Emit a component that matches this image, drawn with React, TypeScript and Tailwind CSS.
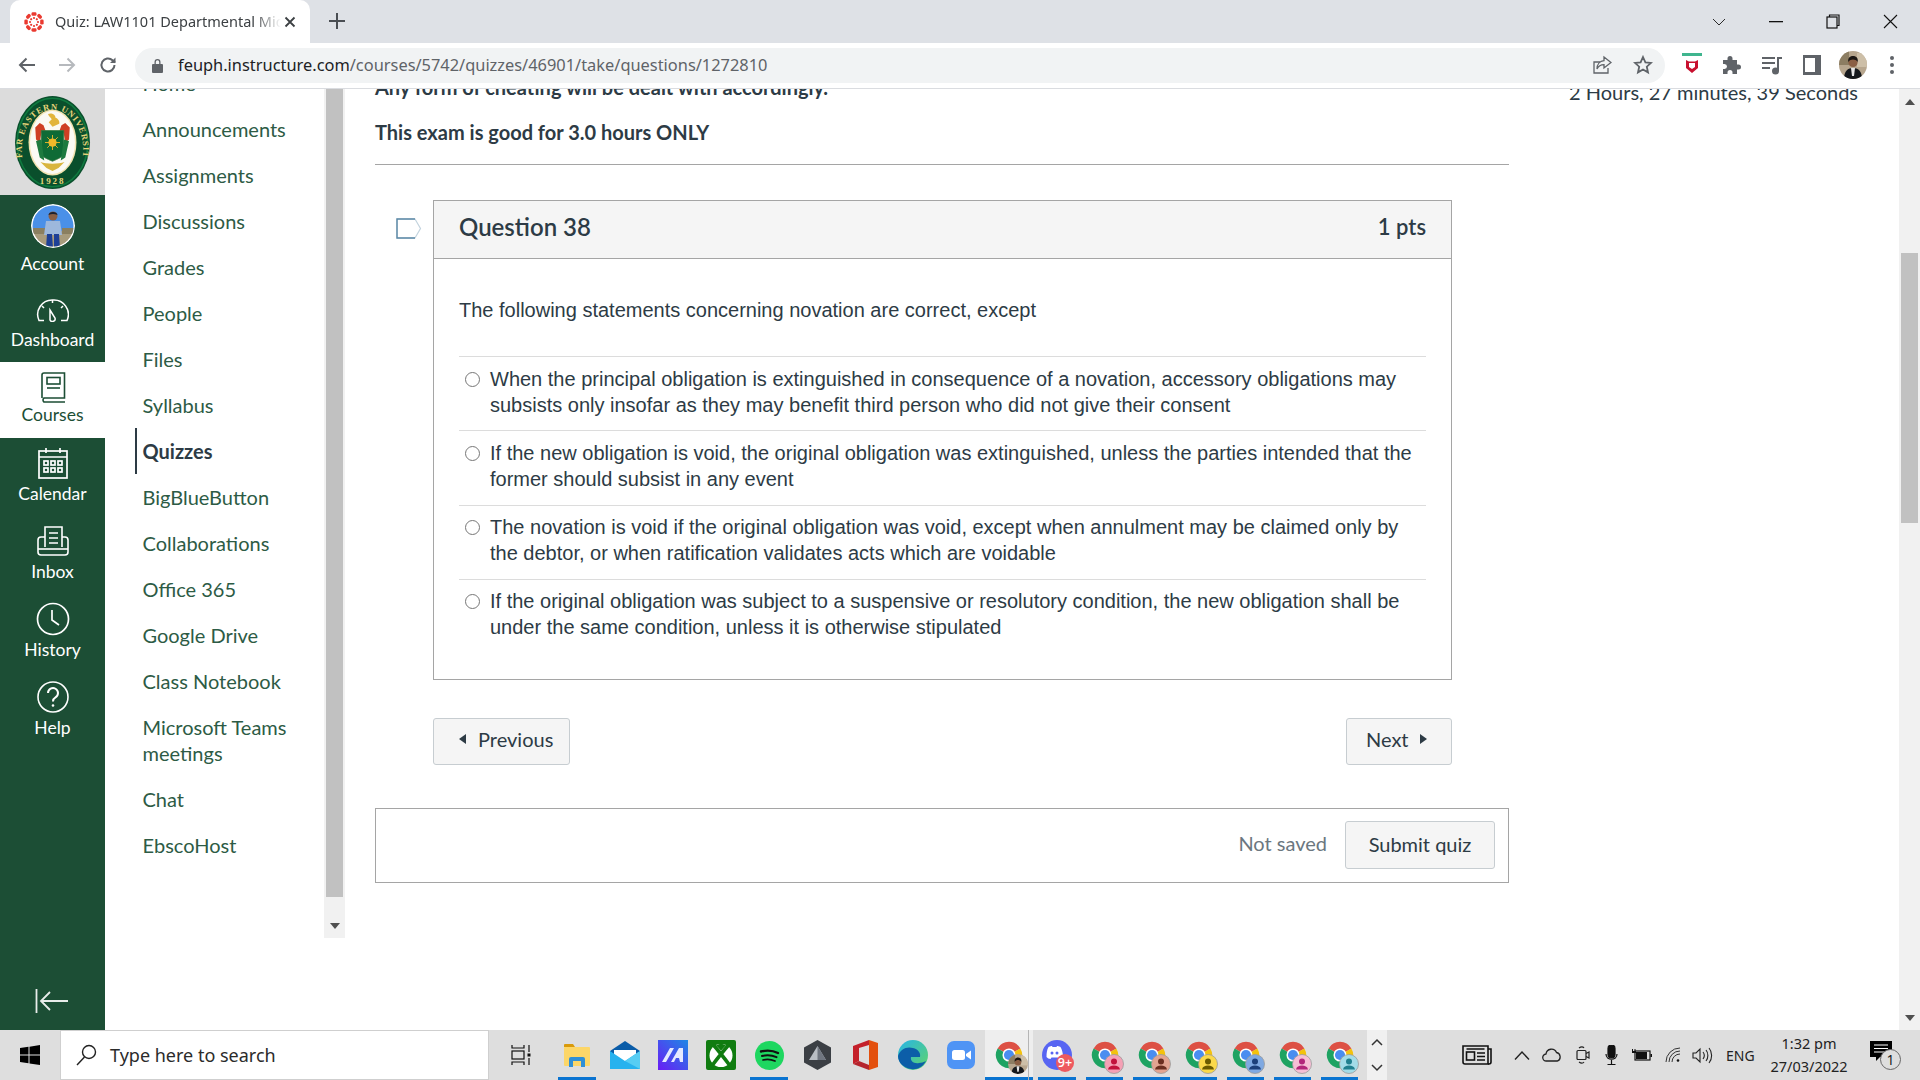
import type { ReactNode } from "react";

const courseLinks = [
  "Announcements",
  "Assignments",
  "Discussions",
  "Grades",
  "People",
  "Files",
  "Syllabus",
  "Quizzes",
  "BigBlueButton",
  "Collaborations",
  "Office 365",
  "Google Drive",
  "Class Notebook",
  "Microsoft Teams meetings",
  "Chat",
  "EbscoHost",
];

const answers = [
  "When the principal obligation is extinguished in consequence of a novation, accessory obligations may subsists only insofar as they may benefit third person who did not give their consent",
  "If the new obligation is void, the original obligation was extinguished, unless the parties intended that the former should subsist in any event",
  "The novation is void if the original obligation was void, except when annulment may be claimed only by the debtor, or when ratification validates acts which are voidable",
  "If the original obligation was subject to a suspensive or resolutory condition, the new obligation shall be under the same condition, unless it is otherwise stipulated",
];

function CanvasIcon() {
  const dots = [0, 45, 90, 135, 180, 225, 270, 315];
  return (
    <svg width="20" height="20" viewBox="0 0 22 22">
      {dots.map((a) => (
        <g key={a} transform={`rotate(${a} 11 11)`}>
          <rect x="8.2" y="0.4" width="5.6" height="3.8" rx="1.5" fill="#ea3a30" />
          <circle cx="11" cy="6.6" r="1.2" fill="#ea3a30" />
        </g>
      ))}
    </svg>
  );
}

function PhotoAvatar({ size }: { size: number }) {
  return (
    <svg width={size} height={size} viewBox="0 0 28 28">
      <clipPath id={`pa${size}`}>
        <circle cx="14" cy="14" r="14" />
      </clipPath>
      <g clipPath={`url(#pa${size})`}>
        <rect width="28" height="28" fill="#b7a68e" />
        <rect x="0" y="0" width="10" height="14" fill="#8c7d62" />
        <rect x="18" y="2" width="10" height="14" fill="#cdbfa8" />
        <path d="M5 28c0-8 4-11 9-11s9 3 9 11z" fill="#15181c" />
        <path d="M12 17h4l-1 8h-2z" fill="#e6e6e6" />
        <circle cx="14" cy="11.5" r="4.6" fill="#8a5f44" />
        <path d="M9.2 11c-.4-4.6 2.2-6 4.8-6s5.3 1.4 4.8 6c-1.500-2-3-2.600-4.800-2.600S10.700 9 9.200 11z" fill="#1c1714" />
      </g>
    </svg>
  );
}

function ChromeBar() {
  return (
    <div className="flex h-[43px] items-end bg-[#dee1e6] pl-[10px] pr-0">
      <div className="flex h-[43px] w-[300px] items-center rounded-t-[10px] bg-white pl-[14px] pr-[14px]">
        <CanvasIcon />
        <span className="ml-[11px] w-[226px] overflow-hidden whitespace-nowrap font-['Noto_Sans',sans-serif] text-[14.5px] text-[#3c4043] [mask-image:linear-gradient(to_right,black_88%,transparent)]">
          Quiz: LAW1101 Departmental Midterm
        </span>
        <svg className="ml-auto" width="12" height="12" viewBox="0 0 12 12" stroke="#3c4043" strokeWidth="1.800">
          <path d="M1.500 1.500l9 9M10.500 1.500l-9 9" />
        </svg>
      </div>
      <svg className="mb-[14px] ml-[19px]" width="16" height="16" viewBox="0 0 16 16" stroke="#4a4e53" strokeWidth="2">
        <path d="M8 0v16M0 8h16" />
      </svg>
      <div className="mb-[14px] ml-auto flex items-center">
        <svg width="14" height="8" viewBox="0 0 14 8" fill="none" stroke="#2b2b2b" strokeWidth="1">
          <path d="M1 1l6 6 6-6" />
        </svg>
        <svg className="ml-[43px]" width="14" height="2" viewBox="0 0 14 2" fill="#111">
          <rect width="14" height="1.300" />
        </svg>
        <svg className="ml-[43px]" width="14" height="15" viewBox="0 0 14 15" fill="none" stroke="#111" strokeWidth="1.200">
          <rect x="1" y="3" width="10" height="11" />
          <path d="M3.500 3V1H13v10.500h-2" />
        </svg>
        <svg className="ml-[43px] mr-[22px]" width="15" height="15" viewBox="0 0 15 15" fill="none" stroke="#111" strokeWidth="1.100">
          <path d="M1 1l13 13M14 1L1 14" />
        </svg>
      </div>
    </div>
  );
}

function AddressBar() {
  return (
    <div className="flex h-[46px] items-center border-b border-[#dadce0] bg-white pb-[1px]">
      <svg className="ml-[18px]" width="18" height="16" viewBox="0 0 18 16" fill="none" stroke="#5f6368" strokeWidth="2">
        <path d="M17 8H2M8.500 1.500L2 8l6.500 6.500" />
      </svg>
      <svg className="ml-[22px]" width="18" height="16" viewBox="0 0 18 16" fill="none" stroke="#b6b9bd" strokeWidth="2">
        <path d="M1 8h15M9.500 1.500L16 8l-6.500 6.500" />
      </svg>
      <svg className="ml-[23px]" width="18" height="18" viewBox="0 0 18 18" fill="none" stroke="#5f6368" strokeWidth="2">
        <path d="M15.500 9a6.500 6.500 0 1 1-2-4.700L16 6.500" />
        <path d="M16.500 1.500v5.500H11" fill="#5f6368" stroke="none" />
      </svg>
      <div className="ml-[18px] flex h-[35px] w-[1530px] items-center rounded-full bg-[#f1f3f4] pl-[17px]">
        <svg width="11" height="15" viewBox="0 0 11 15" fill="#5f6368">
          <path d="M2.500 6V4a3 3 0 0 1 6 0v2H10a1 1 0 0 1 1 1v7a1 1 0 0 1-1 1H1a1 1 0 0 1-1-1V7a1 1 0 0 1 1-1zm1.300 0h3.400V4a1.700 1.700 0 0 0-3.400 0z" />
        </svg>
        <span className="ml-[15px] whitespace-nowrap font-['Noto_Sans',sans-serif] text-[16.4px] text-[#202124]">
          feuph.instructure.com<span className="text-[#5f6368]">/courses/5742/quizzes/46901/take/questions/1272810</span>
        </span>
        <svg className="ml-auto" width="20" height="20" viewBox="0 0 20 20" fill="none" stroke="#5f6368" strokeWidth="1.300">
          <path d="M16 13v5H2V7h6" />
          <path d="M12 2l7 5.500-7 5.500V9.700C9 9.700 6.500 11 5 14c0-5 3-8 7-8.300z" />
        </svg>
        <svg className="ml-[21px] mr-[12px]" width="20" height="20" viewBox="0 0 20 20" fill="none" stroke="#5f6368" strokeWidth="1.800">
          <path d="M10 2l2.400 5.300 5.600.6-4.200 3.800 1.200 5.700L10 14.500l-5 2.900 1.200-5.700L2 7.900l5.600-.6z" />
        </svg>
      </div>
      <svg className="ml-[17px]" width="20" height="24" viewBox="0 0 20 24">
        <rect y="0" width="20" height="3" fill="#3fb58e" />
        <path d="M4 7l3 1.500h6L16 7v8l-6 5-6-5z" fill="#c8102e" />
        <path d="M7 10v4l3 2 3-2v-4" fill="#fff" />
      </svg>
      <svg className="ml-[20px]" width="20" height="20" viewBox="0 0 20 20" fill="#5f6368">
        <path d="M8 1a2.500 2.500 0 0 1 2.500 2.500V5H15v4.500h1.500a2.500 2.500 0 0 1 0 5H15V19H10.500v-1.500a2.500 2.500 0 0 0-5 0V19H1v-5h1.500a2.500 2.500 0 0 0 0-5H1V5h4.500V3.500A2.500 2.500 0 0 1 8 1z" />
      </svg>
      <svg className="ml-[20px]" width="20" height="20" viewBox="0 0 20 20" fill="#5f6368">
        <rect x="0" y="2" width="13" height="2" />
        <rect x="0" y="7" width="13" height="2" />
        <rect x="0" y="12" width="8" height="2" />
        <rect x="15" y="2" width="5" height="2" />
        <rect x="15" y="2" width="2" height="14" />
        <circle cx="13.500" cy="16" r="3.500" />
      </svg>
      <svg className="ml-[20px]" width="20" height="20" viewBox="0 0 20 20" fill="#5f6368">
        <path d="M1 0h18v20H1zM3 3v14h10V3z" fillRule="evenodd" />
      </svg>
      <span className="ml-[17px]">
        <PhotoAvatar size={28} />
      </span>
      <span className="ml-[23px] flex flex-col gap-[3px]">
        <span className="h-[4px] w-[4px] rounded-full bg-[#5f6368]" />
        <span className="h-[4px] w-[4px] rounded-full bg-[#5f6368]" />
        <span className="h-[4px] w-[4px] rounded-full bg-[#5f6368]" />
      </span>
    </div>
  );
}

function SchoolSeal() {
  return (
    <svg width="77" height="93" viewBox="0 0 100 124">
      <ellipse cx="50" cy="62" rx="50" ry="62" fill="#0a4f2c" />
      <ellipse cx="50" cy="62" rx="47" ry="59" fill="none" stroke="#0f7a3f" strokeWidth="2" />
      <ellipse cx="50" cy="62" rx="32" ry="44" fill="#f2e3b0" />
      <ellipse cx="50" cy="62" rx="30" ry="42" fill="#fbfaf4" />
      <path id="sealArc" d="M10 84 A41 54 0 1 1 90 84" fill="none" />
      <text fontFamily="'Liberation Serif',serif" fontSize="11.500" fontWeight="700" fill="#e8d47a" letterSpacing="1.100">
        <textPath href="#sealArc" startOffset="1%">FAR EASTERN UNIVERSITY</textPath>
      </text>
      <text x="50" y="117" textAnchor="middle" fontFamily="'Liberation Serif',serif" fontSize="12" fontWeight="700" fill="#e8d47a" letterSpacing="2.500">
        1928
      </text>
      <path d="M44 24c4-2 10 0 10 5 3 1 6 4 5 8l-9 4-5-6 4-4c-2-3-4-4-5-7z" fill="#e2b53c" />
      <path d="M27 42l6-6 5 3 3 8-6 3-2 12-5-4zM73 42l-6-6-5 3-3 8 6 3 2 12 5-4z" fill="#cf3f24" />
      <path d="M35 46h30v30c0 5-8 8-15 11-7-3-15-6-15-11z" fill="#0e6b36" stroke="#3a7a42" strokeWidth="1" />
      <path d="M28 60l5 22 6 4-4-28zM72 60l-5 22-6 4 4-28z" fill="#1d7a3f" />
      <circle cx="50" cy="62" r="5.500" fill="#f0b92a" />
      <path d="M50 52v20M40 62h20M43 55l14 14M57 55L43 69" stroke="#f0b92a" strokeWidth="1.200" />
      <path d="M34 88c8 3 24 3 32 0l-8 8-8 4-8-4z" fill="#d9b53e" />
    </svg>
  );
}

function DashboardIcon() {
  return (
    <svg width="33" height="23" viewBox="0 0 33 23" fill="none" stroke="#fff" strokeWidth="1.500">
      <path d="M8 21.500H3A14.500 14.500 0 0 1 16.500 1 14.500 14.500 0 0 1 31 21.500h-6" />
      <path d="M14 11l5 8a2.700 2.700 0 0 1-5 2z" />
      <path d="M16.500 1v3M6 7l2 2M27 7l-2 2" />
    </svg>
  );
}

function CoursesIcon() {
  return (
    <svg width="26" height="31" viewBox="0 0 26 31" fill="none" stroke="#1c4e35" strokeWidth="1.600">
      <path d="M2 26V3a2 2 0 0 1 2-2h20.500v25H4a2.500 2.500 0 0 0 0 4h21" />
      <rect x="7" y="5.500" width="13" height="6.500" />
      <path d="M7 16h13" />
    </svg>
  );
}

function CalendarIcon() {
  const cells = [0, 1, 2];
  return (
    <svg width="30" height="32" viewBox="0 0 30 32" fill="none" stroke="#fff" strokeWidth="1.700">
      <rect x="1" y="4" width="28" height="27" />
      <path d="M1 10h28M8 1v5M22 1v5" />
      {cells.map((c) => (
        <g key={c}>
          <rect x={6 + c * 7} y="14" width="4" height="4" />
          <rect x={6 + c * 7} y="21" width="4" height="4" />
        </g>
      ))}
    </svg>
  );
}

function InboxIcon() {
  return (
    <svg width="32" height="30" viewBox="0 0 32 30" fill="none" stroke="#fff" strokeWidth="1.600">
      <path d="M8 21V1h17v20" />
      <path d="M12 7h9M12 12h9M12 17h9" />
      <path d="M8 11H4a3 3 0 0 0-3 3v12a3 3 0 0 0 3 3h24a3 3 0 0 0 3-3V14a3 3 0 0 0-3-3h-3" />
      <path d="M1 23h30" />
    </svg>
  );
}

function HistoryIcon() {
  return (
    <svg width="34" height="34" viewBox="0 0 34 34" fill="none" stroke="#fff" strokeWidth="1.700">
      <circle cx="17" cy="17" r="15.500" />
      <path d="M16 8v10l7 5" />
    </svg>
  );
}

function HelpIcon() {
  return (
    <svg width="32" height="32" viewBox="0 0 32 32" fill="none" stroke="#fff" strokeWidth="1.600">
      <circle cx="16" cy="16" r="15" />
      <path d="M11 12a5 5 0 1 1 7.500 4.400c-1.700 1-2.500 2-2.500 4" strokeWidth="2" />
      <circle cx="16" cy="24.500" r="1.300" fill="#fff" stroke="none" />
    </svg>
  );
}

function NavItem({ icon, label, height, active, labelClass }: { icon: ReactNode; label: string; height: string; active?: boolean; labelClass?: string }) {
  return (
    <div className={`flex flex-col items-center pt-[8px] ${height} ${active ? "bg-white text-[#1c4e35]" : "text-white"}`}>
      <div className="flex h-[34px] items-center justify-center">{icon}</div>
      <span className={`leading-[24px] ${labelClass ?? "mt-[2px]"}`}>{label}</span>
    </div>
  );
}

function GlobalNav() {
  return (
    <div className="flex w-[105px] shrink-0 flex-col bg-[#1c4e35] font-['Lato',sans-serif] text-[17.500px]">
      <div className="flex h-[106px] shrink-0 items-center justify-center bg-[#dcdcdc]">
        <SchoolSeal />
      </div>
      <div className="flex h-[90px] flex-col items-center pt-[9px] text-white">
        <svg className="rounded-full" width="44" height="44" viewBox="0 0 44 44">
          <circle cx="22" cy="22" r="22" fill="#fff" />
          <clipPath id="acct">
            <circle cx="22" cy="22" r="20.500" />
          </clipPath>
          <g clipPath="url(#acct)">
            <rect width="44" height="30" fill="#4a90e8" />
            <rect y="27" width="44" height="17" fill="#a89b7c" />
            <rect x="2" y="24" width="12" height="6" fill="#8a7f60" />
            <rect x="31" y="24" width="12" height="6" fill="#8a7f60" />
            <path d="M15 17h14l2 14H13z" fill="#9db8dc" />
            <path d="M16 30h5l1 14h-7zM23 30h5l1 14h-6z" fill="#1d3f96" />
            <circle cx="22" cy="12" r="4.500" fill="#8a5f44" />
            <path d="M17.500 11c0-4 9-4 9 0-3-1.500-6-1.500-9 0z" fill="#1b2030" />
          </g>
        </svg>
        <span className="mt-[4px] leading-[24px]">Account</span>
      </div>
      <NavItem icon={<DashboardIcon />} label="Dashboard" height="h-[77px]" labelClass="mt-[1px]" />
      <NavItem icon={<CoursesIcon />} label="Courses" height="h-[76px]" active labelClass="mt-[-1px]" />
      <NavItem icon={<CalendarIcon />} label="Calendar" height="h-[78px]" />
      <NavItem icon={<InboxIcon />} label="Inbox" height="h-[78px]" />
      <NavItem icon={<HistoryIcon />} label="History" height="h-[78px]" />
      <NavItem icon={<HelpIcon />} label="Help" height="h-[78px]" />
      <div className="mt-auto pb-[17px] pl-[35px]">
        <svg width="34" height="24" viewBox="0 0 34 24" fill="none" stroke="#e8ecea" strokeWidth="1.800">
          <path d="M1.500 0v24M33 12H6M15 3l-9 9 9 9" />
        </svg>
      </div>
    </div>
  );
}

function CourseNav() {
  return (
    <div className="relative flex h-[849px] w-[240px] shrink-0 overflow-hidden font-['Lato',sans-serif] text-[20px]">
      <div className="w-[219px] pl-[30px]">
        <ul className="-mt-[29px] text-[#2d5b45]">
          <li className="flex h-[46px] items-center pl-[7.500px]">Home</li>
          {courseLinks.map((link) =>
            link === "Quizzes" ? (
              <li key={link} className="flex h-[46px] items-center border-l-2 border-[#2d3b45] pl-[5.500px] font-bold text-[#2d3b45]">
                {link}
              </li>
            ) : (
              <li key={link} className={`flex items-center pl-[7.500px] leading-[26px] ${link.length > 20 ? "h-[72px]" : "h-[46px]"}`}>
                {link}
              </li>
            ),
          )}
        </ul>
      </div>
      <div className="flex h-full w-[21px] flex-col items-center bg-[#f1f1f1]">
        <div className="h-[808px] w-[17px] bg-[#c1c1c1]" />
        <svg className="mt-[26px]" width="10" height="6" viewBox="0 0 10 6" fill="#505050">
          <path d="M0 0h10L5 6z" />
        </svg>
      </div>
    </div>
  );
}

function LabelIcon() {
  return (
    <svg width="26" height="21" viewBox="0 0 26 21" fill="none">
      <path d="M1 1h18l5.500 9.500L19 20H1z" stroke="#c3d3de" strokeWidth="1.200" />
      <path d="M19 1H1v19h18" stroke="#5b88a6" strokeWidth="1.400" />
    </svg>
  );
}

function NavButton({ children, className }: { children: ReactNode; className: string }) {
  return (
    <div className={`flex h-[47px] items-center rounded-[3px] border border-[#c7cdd1] bg-[#f5f5f5] pb-[5px] text-[20px] text-[#2d3b45] ${className}`}>
      {children}
    </div>
  );
}

function QuestionCard() {
  return (
    <div className="flex">
      <div className="ml-[21px] mt-[18px] w-[37px]">
        <LabelIcon />
      </div>
      <div className="w-[1019px]">
        <div className="h-[480px] border border-[#a5a5a5]">
          <div className="flex h-[58px] items-center justify-between border-b border-[#a5a5a5] bg-[#f5f5f5] px-[25px] pb-[6px] text-[#2d3b45]">
            <span className="text-[24px] font-semibold">Question 38</span>
            <span className="text-[22px] font-semibold">1 pts</span>
          </div>
          <div className="px-[25px] font-['Liberation_Sans',Arial,sans-serif] text-[20px] leading-[26px] text-[#2d3b45]">
            <p className="flex h-[98px] items-center border-b border-[#dcdcdc] pt-[5px]">
              The following statements concerning novation are correct, except
            </p>
            {answers.map((a, i) => (
              <label key={a} className={`flex h-[74.250px] pt-[8.500px] ${i < 3 ? "border-b border-[#dcdcdc]" : ""}`}>
                <input type="radio" name="q38" className="ml-[6px] mr-[10px] mt-[6px] h-[15px] w-[15px] shrink-0" />
                <span>{a}</span>
              </label>
            ))}
          </div>
        </div>
        <div className="mt-[38px] flex justify-between">
          <NavButton className="w-[137px] pl-[25px]">
            <svg className="mr-[12px]" width="7" height="10" viewBox="0 0 7 10" fill="#2d3b45">
              <path d="M7 0v10L0 5z" />
            </svg>
            Previous
          </NavButton>
          <NavButton className="w-[106px] pl-[19px]">
            Next
            <svg className="ml-[11px]" width="7" height="10" viewBox="0 0 7 10" fill="#2d3b45">
              <path d="M0 0v10l7-5z" />
            </svg>
          </NavButton>
        </div>
      </div>
    </div>
  );
}

function QuizContent() {
  return (
    <div className="flex min-w-0 flex-1 overflow-hidden font-['Lato',sans-serif]">
      <div className="ml-[30px] w-[1134px] shrink-0">
        <p className="-mt-[15.500px] text-[20px] font-bold leading-[26px] text-[#2d3b45]">Any form of cheating will be dealt with accordingly.</p>
        <p className="mt-[19px] text-[20px] font-bold leading-[26px] text-[#2d3b45]">This exam is good for 3.0 hours ONLY</p>
        <div className="mt-[19.500px] h-px bg-[#a5a5a5]" />
        <div className="mt-[35px]">
          <QuestionCard />
        </div>
        <div className="mt-[43px] flex h-[75px] items-start justify-end border border-[#a5a5a5] pr-[13px] pt-[12px]">
          <span className="mr-[18px] mt-[8px] text-[20px] leading-[28px] text-[#6b7780]">Not saved</span>
          <div className="flex h-[48px] w-[150px] items-center justify-center rounded-[3px] border border-[#c7cdd1] bg-[#f5f5f5] pb-[2px] text-[20px] text-[#2d3b45]">
            Submit quiz
          </div>
        </div>
      </div>
      <div className="ml-[60px] -mt-[10px] w-[289px] whitespace-nowrap text-right text-[20px] leading-[26px] text-[#2d3b45]">
        2 Hours, 27 minutes, 39 Seconds
      </div>
    </div>
  );
}

function PageScrollbar() {
  return (
    <div className="flex w-[21px] shrink-0 flex-col items-center bg-[#f1f1f1]">
      <svg className="mt-[10px]" width="10" height="6" viewBox="0 0 10 6" fill="#505050">
        <path d="M0 6h10L5 0z" />
      </svg>
      <div className="mt-[148px] h-[270px] w-[17px] bg-[#c1c1c1]" />
      <svg className="mb-[9px] mt-auto" width="10" height="6" viewBox="0 0 10 6" fill="#505050">
        <path d="M0 0h10L5 6z" />
      </svg>
    </div>
  );
}

function Explorer() {
  return (
    <svg width="28" height="24" viewBox="0 0 28 24">
      <path d="M1 2a1 1 0 0 1 1-1h8l2 3H1z" fill="#d99a0b" />
      <rect x="1" y="4" width="26" height="19" rx="1" fill="#fcd668" />
      <path d="M6 24v-8a2 2 0 0 1 2-2h12a2 2 0 0 1 2 2v8h-4v-6h-8v6z" fill="#2f8fd6" />
    </svg>
  );
}

function Mail() {
  return (
    <svg width="30" height="28" viewBox="0 0 30 28">
      <path d="M0 10L15 0l15 10v18H0z" fill="#0a5ca8" />
      <path d="M4 9h22v6l-11 6-11-6z" fill="#fff" />
      <path d="M0 10l15 10 15-10v18H0z" fill="#27b2ee" />
      <path d="M15 20l15-10v18z" fill="#57cdf3" />
    </svg>
  );
}

function TaskIcon({ children, underline, wide, active }: { children: ReactNode; underline?: boolean; wide?: boolean; active?: boolean }) {
  return (
    <div className={`relative flex h-full shrink-0 items-center justify-center ${wide ? "w-[48px]" : "w-[47px]"} ${active ? "bg-[#eeeeee]" : ""}`}>
      {children}
      {underline && <div className="absolute bottom-0 left-[5px] right-[5px] h-[3px] bg-[#0a74d1]" />}
      {active && <div className="absolute bottom-0 left-0 right-0 h-[3px] bg-[#0a74d1]" />}
      {active && <div className="absolute bottom-0 right-[4px] top-0 w-px bg-[#b5b5b5]" />}
    </div>
  );
}

function ChromeIcon({ badge, person, photo }: { badge?: string; person?: string; photo?: boolean }) {
  return (
    <div className="relative h-[28px] w-[28px]">
      <svg width="28" height="28" viewBox="0 0 32 32">
        <path d="M16 16L3 8.500A15 15 0 0 1 29 8.500z" fill="#dd5044" />
        <path d="M16 16L29 8.500A15 15 0 0 1 16 31z" fill="#f4c20d" />
        <path d="M16 16L16 31A15 15 0 0 1 3 8.500z" fill="#1ea362" />
        <circle cx="16" cy="16" r="7.500" fill="#fff" />
        <circle cx="16" cy="16" r="5.800" fill="#4a8df0" />
      </svg>
      {photo && (
        <span className="absolute -bottom-[5px] -right-[5px] block h-[20px] w-[20px]">
          <PhotoAvatar size={20} />
        </span>
      )}
      {badge && (
        <svg className="absolute -bottom-[5px] -right-[5px]" width="20" height="20" viewBox="0 0 20 20">
          <circle cx="10" cy="10" r="9.500" fill={badge} stroke="#9b9b9b" strokeWidth="0.800" />
          <circle cx="10" cy="7.500" r="3" fill={person} />
          <path d="M4 15.500c.5-3 3-4 6-4s5.500 1 6 4z" fill={person} />
        </svg>
      )}
    </div>
  );
}

function TaskBar() {
  return (
    <div className="flex h-[50px] shrink-0 items-stretch bg-[#dedede] font-['Open_Sans',sans-serif]">
      <div className="flex w-[60px] items-center justify-center">
        <svg width="20" height="20" viewBox="0 0 20 20" fill="#000">
          <path d="M0 3l8.500-1.200v7.800H0zM9.500 1.700L20 0v9.600H9.500zM0 10.500h8.500v7.700L0 17zM9.500 10.500H20V20L9.500 18.400z" />
        </svg>
      </div>
      <div className="flex w-[429px] items-center border border-[#cfcfcf] bg-white pl-[15px]">
        <svg width="21" height="22" viewBox="0 0 21 22" fill="none" stroke="#222" strokeWidth="1.400">
          <circle cx="13" cy="8" r="6.500" />
          <path d="M8.500 13L1 21" />
        </svg>
        <span className="ml-[13px] font-['Noto_Sans',sans-serif] text-[18px] text-[#2b2b2b]">Type here to search</span>
      </div>
      <div className="flex w-[64px] items-center justify-center">
        <svg width="20" height="20" viewBox="0 0 20 20" fill="none" stroke="#111" strokeWidth="1.200">
          <path d="M1 0v3h12V0M1 20v-3h12v3" />
          <rect x="1" y="6" width="12" height="8" />
          <path d="M18 0v7M18 13v7" />
          <rect x="16.500" y="8.500" width="3" height="3" fill="#111" stroke="none" />
        </svg>
      </div>
      <TaskIcon wide underline>
        <Explorer />
      </TaskIcon>
      <TaskIcon wide>
        <Mail />
      </TaskIcon>
      <TaskIcon wide>
        <svg width="30" height="30" viewBox="0 0 30 30">
          <defs>
            <linearGradient id="mai" x1="0" y1="1" x2="1" y2="0">
              <stop offset="0" stopColor="#6a1cf5" />
              <stop offset="1" stopColor="#1e88e5" />
            </linearGradient>
          </defs>
          <rect width="30" height="30" fill="url(#mai)" />
          <path d="M4 22L12 8h4L8 22zM13 22l8-14h4v14h-3l-1-4h-3l-2 4z" fill="#e5e9ff" />
        </svg>
      </TaskIcon>
      <TaskIcon wide>
        <svg width="30" height="30" viewBox="0 0 30 30">
          <rect width="30" height="30" rx="2" fill="#107c10" />
          <circle cx="15" cy="15.500" r="11.500" fill="#fff" />
          <path d="M7 4.500C11 9 19 19 25 27M23 4.500C19 9 11 19 5 27" stroke="#107c10" strokeWidth="3.600" fill="none" />
          <path d="M15 3.500l-5 1.800 5 5.500 5-5.500z" fill="#107c10" />
        </svg>
      </TaskIcon>
      <TaskIcon wide underline>
        <svg width="29" height="29" viewBox="0 0 29 29" fill="none" stroke="#111" strokeLinecap="round">
          <circle cx="14.500" cy="14.500" r="14.500" fill="#1ed760" stroke="none" />
          <path d="M6 10.500c6-1.500 12-1 17 1.500" strokeWidth="2.400" />
          <path d="M7 15c5-1.200 10-.8 14.500 1.200" strokeWidth="2" />
          <path d="M8 19c4-1 8-.7 12 1" strokeWidth="1.700" />
        </svg>
      </TaskIcon>
      <TaskIcon wide>
        <svg width="27" height="30" viewBox="0 0 27 30">
          <path d="M13.500 0L27 7.500v15L13.500 30 0 22.500v-15z" fill="#3b3f44" />
          <path d="M13.500 6L22 20H5z" fill="#b9bec4" />
          <path d="M13.500 6L22 20h-8.500z" fill="#707680" />
        </svg>
      </TaskIcon>
      <TaskIcon wide>
        <svg width="25" height="30" viewBox="0 0 25 30">
          <path d="M16 0l9 3v24l-9 3z" fill="#e3500e" />
          <path d="M0 6L16 0v5L6 8v13l-6 3z" fill="#c4202a" />
          <path d="M0 24l6-3 10 4v5z" fill="#b5252e" />
        </svg>
      </TaskIcon>
      <TaskIcon wide>
        <svg width="30" height="30" viewBox="0 0 30 30">
          <defs>
            <linearGradient id="edge" x1="0" y1="0" x2="1" y2="1">
              <stop offset="0" stopColor="#27b4e8" />
              <stop offset="1" stopColor="#5fd568" />
            </linearGradient>
          </defs>
          <circle cx="15" cy="15" r="15" fill="url(#edge)" />
          <path d="M0 16c2-7 9-10 15-8 5 1 8 5 7 9H13c-1 4 3 7 8 6 2 0 5-1 7-2-3 6-9 9-15 8C6 28 0 23 0 16z" fill="#0c5ea8" />
        </svg>
      </TaskIcon>
      <TaskIcon wide>
        <svg width="28" height="28" viewBox="0 0 28 28">
          <rect width="28" height="28" rx="7" fill="#4f94f5" />
          <rect x="5" y="9" width="13" height="10" rx="2.500" fill="#fff" />
          <path d="M19 13l5-3.500v9L19 15z" fill="#fff" />
        </svg>
      </TaskIcon>
      <TaskIcon wide active>
        <ChromeIcon photo />
      </TaskIcon>
      <TaskIcon wide underline>
        <div className="relative h-[30px] w-[30px] rounded-full bg-[#5865f2]">
          <svg className="absolute left-[4px] top-[6px]" width="17" height="13" viewBox="0 0 17 13">
            <path d="M2.500 1C4 .3 5.500 0 6 0l.5 1h4l.5-1c.5 0 2 .3 3.500 1 1.500 2.500 2.500 6 2.500 10-1 1-2.500 2-4 2l-1-1.500H5.500L4.500 13c-1.500 0-3-1-4-2 0-4 .5-7.500 2-10z" fill="#fff" />
            <circle cx="6" cy="7" r="1.500" fill="#5865f2" />
            <circle cx="11" cy="7" r="1.500" fill="#5865f2" />
          </svg>
          <span className="absolute -bottom-[2px] -right-[2px] flex h-[18px] w-[18px] items-center justify-center rounded-full bg-[#ee5a5f] text-[12.500px] font-semibold leading-none text-white">
            9+
          </span>
        </div>
      </TaskIcon>
      <TaskIcon underline>
        <ChromeIcon badge="#f5a0b5" person="#c2123c" />
      </TaskIcon>
      <TaskIcon underline>
        <ChromeIcon badge="#e2a491" person="#6b2f20" />
      </TaskIcon>
      <TaskIcon underline>
        <ChromeIcon badge="#fbd94a" person="#6b5b00" />
      </TaskIcon>
      <TaskIcon underline>
        <ChromeIcon badge="#7fa9e2" person="#1c3f7a" />
      </TaskIcon>
      <TaskIcon underline>
        <ChromeIcon badge="#f6bfd5" person="#b3277a" />
      </TaskIcon>
      <TaskIcon underline>
        <ChromeIcon badge="#a3dce8" person="#20808f" />
      </TaskIcon>
      <div className="ml-[4px] flex w-[20px] flex-col items-center justify-between bg-[#f0f0f0] py-[8px]">
        <svg width="12" height="8" viewBox="0 0 12 8" fill="none" stroke="#333" strokeWidth="1.500">
          <path d="M1 7l5-5 5 5" />
        </svg>
        <svg width="12" height="8" viewBox="0 0 12 8" fill="none" stroke="#333" strokeWidth="1.500">
          <path d="M1 1l5 5 5-5" />
        </svg>
      </div>
      <div className="ml-[75px] flex items-center">
        <svg width="30" height="20" viewBox="0 0 30 20" fill="none" stroke="#111" strokeWidth="1.600">
          <path d="M1 1h25v18H3a2 2 0 0 1-2-2z" />
          <path d="M26 4h3v13a2 2 0 0 1-2 2h-1" />
          <rect x="4.500" y="7" width="8" height="8" />
          <path d="M4.500 4h18M15 8h8M15 11.500h8M15 15h8" />
        </svg>
        <svg className="ml-[22px]" width="16" height="9" viewBox="0 0 16 9" fill="none" stroke="#222" strokeWidth="1.400">
          <path d="M1 8.500l7-7.500 7 7.500" />
        </svg>
        <svg className="ml-[12px]" width="20" height="14" viewBox="0 0 20 14" fill="#d9d9d9" stroke="#222" strokeWidth="1.300">
          <path d="M4.500 13a3.500 3.500 0 0 1-.5-7 5.500 5.500 0 0 1 10.500-1.500A4.500 4.500 0 0 1 15.500 13z" />
        </svg>
        <svg className="ml-[14px]" width="14" height="20" viewBox="0 0 14 20" fill="none" stroke="#222" strokeWidth="1.200">
          <path d="M3 3c2-1.500 4-1.500 5 0M3 17c2 1.500 4 1.500 5 0" />
          <rect x="1" y="5.500" width="9" height="9" rx="1" />
          <path d="M10 8.500l3-1.500v6l-3-1.500" />
        </svg>
        <svg className="ml-[15px]" width="13" height="20" viewBox="0 0 13 20" fill="none" stroke="#111" strokeWidth="1.200">
          <rect x="3" y="0" width="7" height="13" rx="3.500" fill="#111" />
          <path d="M1 9c0 7 11 7 11 0M6.500 15v4M2.500 19.500h8" />
        </svg>
        <svg className="ml-[14px]" width="20" height="14" viewBox="0 0 20 14" fill="#111">
          <rect x="3" y="3" width="15" height="9" fill="none" stroke="#111" strokeWidth="1.200" />
          <rect x="4" y="4" width="11" height="7" />
          <rect x="18.500" y="6" width="1.500" height="3" />
          <path d="M0 1h1v2H0zM2.500 1h1v2h-1zM0 3h4v2H0z" />
        </svg>
        <svg className="ml-[13px]" width="16" height="16" viewBox="0 0 16 16" fill="none" stroke="#333" strokeWidth="1">
          <path d="M1 15A14 14 0 0 1 15 1M4 15A11 11 0 0 1 15 4M7 15a8 8 0 0 1 8-8" />
          <circle cx="13" cy="13.500" r="1.300" fill="#111" stroke="none" />
        </svg>
        <svg className="ml-[11px]" width="21" height="17" viewBox="0 0 21 17" fill="none" stroke="#222" strokeWidth="1.100">
          <path d="M1 6v5h3l4 4V2L4 6z" />
          <path d="M11 5c1.500 2 1.500 5 0 7M14 3c2.500 3 2.500 8 0 11M17 1c3.500 4 3.500 11 0 15" />
        </svg>
        <span className="ml-[13px] w-[28px] whitespace-nowrap font-['Noto_Sans',sans-serif] text-[14px] text-[#222]">ENG</span>
        <div className="ml-[13px] flex w-[84px] flex-col items-center font-['Noto_Sans',sans-serif] text-[14.500px] leading-[23px] text-[#222]">
          <span>1:32 pm</span>
          <span>27/03/2022</span>
        </div>
        <div className="relative ml-[19px] h-[30px] w-[30px]">
          <svg className="absolute left-0 top-[1px]" width="22" height="21" viewBox="0 0 22 21" fill="#000">
            <path d="M0 0h22v16H10l-4 4v-4H0z" />
            <path d="M4 4h14M4 7.500h14M4 11h14" stroke="#fff" strokeWidth="1" />
          </svg>
          <span className="absolute left-[10px] top-[9px] flex h-[21px] w-[21px] items-center justify-center rounded-full border border-[#666] bg-[#dedede] text-[14px] leading-none text-[#111]">
            1
          </span>
        </div>
      </div>
    </div>
  );
}

export default function App() {
  return (
    <div className="flex h-[1080px] w-[1920px] flex-col overflow-hidden bg-white">
      <ChromeBar />
      <AddressBar />
      <div className="flex min-h-0 flex-1">
        <GlobalNav />
        <CourseNav />
        <QuizContent />
        <PageScrollbar />
      </div>
      <TaskBar />
    </div>
  );
}
